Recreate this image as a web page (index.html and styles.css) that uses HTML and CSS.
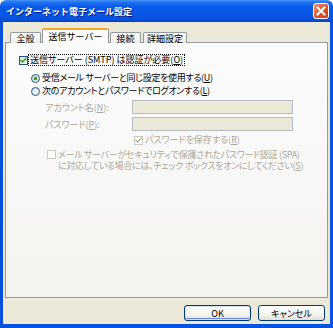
FILE: index.html
```html
<!DOCTYPE html>
<html lang="ja">
<head>
  <meta charset="UTF-8" />
  <title>インターネット電子メール設定</title>
  <link rel="stylesheet" href="styles.css">
</head>
<body>

  <div class="window">
    <div class="titlebar">
      <span class="title">インターネット電子メール設定</span>
      <span class="close">
        <svg width="16" height="16" viewBox="0 0 16 16">
          <defs>
            <linearGradient id="cg" x1="0" y1="0" x2="1" y2="1">
              <stop offset="0" stop-color="#f09a7c"/>
              <stop offset="0.5" stop-color="#e0552f"/>
              <stop offset="1" stop-color="#c2391b"/>
            </linearGradient>
          </defs>
          <rect x="0.5" y="0.5" width="15" height="15" rx="2.5" fill="url(#cg)" stroke="#fff"/>
          <path d="M4.5 4.5 L11.5 11.5 M11.5 4.5 L4.5 11.5" stroke="#fff" stroke-width="2" stroke-linecap="square"/>
        </svg>
      </span>
    </div>

    <div class="body">
      <div class="tabs">
        <div class="tab tab-general">全般</div>
        <div class="tab tab-active">送信サーバー</div>
        <div class="tab tab-conn">接続</div>
        <div class="tab tab-adv">詳細設定</div>
      </div>

      <div class="panel">
        <div class="row row-auth">
          <span class="cb checked">
            <svg width="7" height="7" viewBox="0 0 7 7"><path d="M0.5 3 L2.5 5 L6.5 1" fill="none" stroke="#21a121" stroke-width="1.5"/></svg>
          </span>
          <span class="label focus">送信サーバー (SMTP) は認証が必要(<u>O</u>)</span>
        </div>

        <div class="row row-radio first">
          <span class="radio on"></span>
          <span class="label tight">受信メール サーバーと同じ設定を使用する(<u>U</u>)</span>
        </div>

        <div class="row row-radio">
          <span class="radio"></span>
          <span class="label tight">次のアカウントとパスワードでログオンする(<u>L</u>)</span>
        </div>

        <div class="field field-first">
          <span class="field-label">アカウント名(<u>N</u>):</span>
          <span class="input"></span>
        </div>

        <div class="field">
          <span class="field-label">パスワード(<u>P</u>):</span>
          <span class="input"></span>
        </div>

        <div class="row row-save">
          <span class="cb disabled">
            <svg width="7" height="7" viewBox="0 0 7 7"><path d="M0.5 3 L2.5 5 L6.5 1" fill="none" stroke="#aca899" stroke-width="1.2"/></svg>
          </span>
          <span class="label dim">パスワードを保存する(<u>R</u>)</span>
        </div>

        <div class="row row-spa">
          <span class="cb disabled"></span>
          <span class="label dim tight spa-text">メール サーバーがセキュリティで保護されたパスワード認証 (SPA)<br>に対応している場合には、チェック ボックスをオンにしてください(<u>S</u>)</span>
        </div>
      </div>

      <div class="buttons">
        <button class="btn btn-default">OK</button>
        <button class="btn">キャンセル</button>
      </div>
    </div>
  </div>

</body>
</html>
```

FILE: styles.css
```css
body {
  margin: 0;
  font-family: "Noto Sans CJK JP", "Noto Sans", sans-serif;
  font-size: 9px;
  color: #000;
  background: #fff;
}

.window {
  width: 333px;
  height: 328px;
  display: flex;
  flex-direction: column;
}

.titlebar {
  height: 22px;
  box-sizing: border-box;
  border-radius: 6px 6px 0 0;
  background: linear-gradient(#4a94f8 0%, #1f72f2 10%, #0a5ae8 30%, #0656e6 70%, #0a4fda 90%, #0040c8 100%);
  display: flex;
  align-items: center;
  justify-content: space-between;
  padding: 0 4px 0 6px;
}

.title {
  color: #fff;
  font-weight: bold;
  font-size: 9px;
  text-shadow: 1px 1px 0 #0a1883;
}

.close {
  display: flex;
}

.body {
  flex: 1;
  background: #ece9d8;
  border: 3px solid #0553e0;
  border-top: none;
  border-bottom-width: 4px;
  border-left-color: #0a4fdc;
  padding: 6px 2px 0 2px;
  display: flex;
  flex-direction: column;
}

.tabs {
  display: flex;
  align-items: flex-end;
  height: 15px;
  padding-left: 5px;
  position: relative;
  z-index: 1;
}

.tab {
  height: 11px;
  box-sizing: border-box;
  border: 1px solid #919b9c;
  border-bottom: none;
  border-radius: 2px 2px 0 0;
  background: linear-gradient(#fefefe, #ecebe6);
  display: flex;
  align-items: center;
  justify-content: center;
  line-height: 1;
}

.tab-general {
  width: 31px;
}

.tab-active {
  width: 67px;
  height: 15px;
  margin-left: 1px;
  background: #fcfcfe;
  border-top: 2px solid #f5a623;
  padding-bottom: 1px;
}

.tab-conn {
  width: 31px;
  margin-left: 1px;
}

.tab-adv {
  width: 44px;
  margin-left: 2px;
}

.panel {
  height: 256px;
  margin-top: -1px;
  box-sizing: border-box;
  border: 1px solid #919b9c;
  background: linear-gradient(#fcfcfe, #f4f3ee);
  padding: 11px 0 0 13px;
  display: flex;
  flex-direction: column;
  font-feature-settings: "palt";
}

.row {
  display: flex;
  align-items: center;
  height: 12px;
}

.cb {
  width: 9px;
  height: 9px;
  box-sizing: border-box;
  border: 1px solid #1c5180;
  background: linear-gradient(135deg, #dcdcd7, #fff);
  display: flex;
  align-items: center;
  justify-content: center;
  flex-shrink: 0;
}

.cb.disabled {
  border-color: #cac8bb;
  background: #fff;
}

.label {
  margin-left: 2px;
  white-space: nowrap;
  line-height: 10px;
}

.tight {
  letter-spacing: -0.3px;
}

.focus {
  margin-left: 1px;
  padding: 0 1px;
  outline: 1px dotted #000;
}

.dim {
  color: #aca899;
}

.row-radio {
  margin-left: 12px;
  margin-top: 1px;
}

.row-radio.first {
  margin-top: 6px;
}

.radio {
  width: 9px;
  height: 9px;
  box-sizing: border-box;
  border: 1px solid #1c5180;
  border-radius: 50%;
  background: linear-gradient(135deg, #dcdcd7, #fff);
  display: flex;
  align-items: center;
  justify-content: center;
  flex-shrink: 0;
}

.radio.on::after {
  content: "";
  width: 3px;
  height: 3px;
  border-radius: 50%;
  background: #3a8f2a;
  box-shadow: 0 0 0 0.5px #6cbf5c;
}

.field {
  display: flex;
  align-items: center;
  height: 14px;
  margin-left: 26px;
  margin-top: 3px;
}

.field-label {
  width: 87px;
  color: #aca899;
  white-space: nowrap;
}

.input {
  width: 161px;
  height: 14px;
  box-sizing: border-box;
  border: 1px solid #b4bcc4;
  background: #ebe8d8;
}

.row-save {
  margin-left: 115px;
  margin-top: 3px;
}

.row-spa {
  margin-left: 28px;
  margin-top: 3px;
  height: auto;
  align-items: flex-start;
}

.row-spa .cb {
  margin-top: 1px;
}

.spa-text {
  line-height: 11px;
}

.buttons {
  display: flex;
  justify-content: flex-end;
  gap: 7px;
  margin-top: 7px;
  padding-right: 3px;
}

.btn {
  width: 67px;
  height: 16px;
  padding: 0;
  font-family: inherit;
  font-size: 9px;
  line-height: 1;
  border: 1px solid #003c74;
  border-radius: 3px;
  background: linear-gradient(#fff 0%, #f5f4ee 60%, #e3e0d3 100%);
  color: #000;
  font-feature-settings: "palt";
}

.btn-default {
  box-shadow: inset 0 0 0 1px #cee7ff, inset 0 -1px 0 1px #6982ee;
}
```
